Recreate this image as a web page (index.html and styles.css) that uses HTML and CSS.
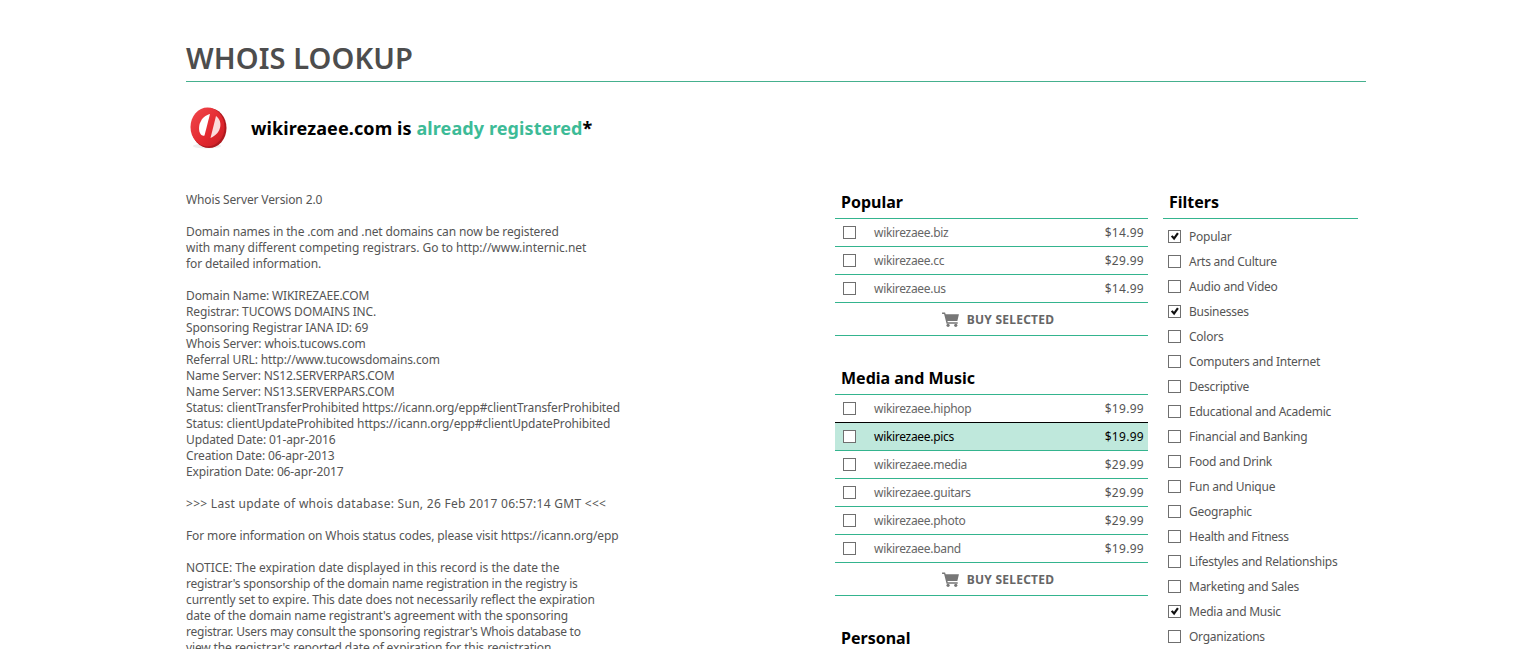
FILE: index.html
```html
<!DOCTYPE html>
<html lang="en">
<head>
    <meta charset="UTF-8">
    <meta name="viewport" content="width=device-width, initial-scale=1.0">
    <title>Whois Lookup</title>
    <link rel="stylesheet" href="styles.css">
</head>
<body>

<svg class="defs" width="0" height="0">
    <defs>
        <linearGradient id="disc" x1="0" y1="0" x2="1" y2="1">
            <stop offset="0" stop-color="#f0484c"/>
            <stop offset="0.6" stop-color="#e3282f"/>
            <stop offset="1" stop-color="#c81d24"/>
        </linearGradient>
    </defs>
    <symbol id="cart" viewBox="0 0 18 16">
        <path d="M0 0.6h3.2l0.6 1.7h14.2l-1.7 7.3H5.7l0.4 1.4h10.6v1.4H4.8L2.2 2H0z"/>
        <circle cx="6.4" cy="14.2" r="1.7"/>
        <circle cx="14.6" cy="14.2" r="1.7"/>
    </symbol>
    <symbol id="check" viewBox="0 0 13 13">
        <path d="M2.2 6.6l1.9-1.7 1.8 2 3.6-5 2.1 1.4-5.5 7.6z"/>
    </symbol>
</svg>

<div class="page">
    <h1 class="page-title">WHOIS LOOKUP</h1>

    <div class="status">
        <svg class="status-icon" width="42" height="44" viewBox="0 0 42 44">
            <ellipse cx="21" cy="40" rx="14" ry="2.5" fill="#eee"/>
            <ellipse cx="23" cy="22" rx="17.5" ry="20" fill="#b0191f"/>
            <ellipse cx="21.5" cy="21" rx="17" ry="19.5" fill="url(#disc)"/>
            <path d="M14.5 28C10.500 21 15 10 24 8L18.500 29.500C17 30 15.500 29.500 14.500 28z" fill="#fff"/>
            <path d="M30 10C37 15 36 27 24.500 32z" fill="#fbdcdc"/>
        </svg>
        <p class="status-text">wikirezaee.com is <span class="green">already registered</span>*</p>
    </div>

    <div class="main">
        <pre class="whois">Whois Server Version 2.0

Domain names in the .com and .net domains can now be registered
<span class="loose">with many different competing registrars. Go to http://www.internic.net</span>
for detailed information.

Domain Name: WIKIREZAEE.COM
Registrar: TUCOWS DOMAINS INC.
Sponsoring Registrar IANA ID: 69
Whois Server: whois.tucows.com
Referral URL: http://www.tucowsdomains.com
Name Server: NS12.SERVERPARS.COM
Name Server: NS13.SERVERPARS.COM
Status: clientTransferProhibited https://icann.org/epp#clientTransferProhibited
Status: clientUpdateProhibited https://icann.org/epp#clientUpdateProhibited
Updated Date: 01-apr-2016
Creation Date: 06-apr-2013
Expiration Date: 06-apr-2017

<span class="wide">&gt;&gt;&gt; Last update of whois database: Sun, 26 Feb 2017 06:57:14 GMT &lt;&lt;&lt;</span>

For more information on Whois status codes, please visit https://icann.org/epp

<span class="loose">NOTICE: The expiration date displayed in this record is the date the</span>
<span class="tight">registrar's sponsorship of the domain name registration in the registry is</span>
currently set to expire. This date does not necessarily reflect the expiration
date of the domain name registrant's agreement with the sponsoring
<span class="tight">registrar. Users may consult the sponsoring registrar's Whois database to</span>
view the registrar's reported date of expiration for this registration.</pre>

        <div class="domains">
            <h2 class="box-title">Popular</h2>
            <div class="domain"><span class="box"></span><span class="name">wikirezaee.biz</span><span class="price">$14.99</span></div>
            <div class="domain"><span class="box"></span><span class="name">wikirezaee.cc</span><span class="price">$29.99</span></div>
            <div class="domain"><span class="box"></span><span class="name">wikirezaee.us</span><span class="price">$14.99</span></div>
            <div class="buy"><svg class="cart"><use href="#cart"/></svg>BUY SELECTED</div>

            <h2 class="box-title">Media and Music</h2>
            <div class="domain"><span class="box"></span><span class="name">wikirezaee.hiphop</span><span class="price">$19.99</span></div>
            <div class="domain selected"><span class="box"></span><span class="name">wikirezaee.pics</span><span class="price">$19.99</span></div>
            <div class="domain"><span class="box"></span><span class="name">wikirezaee.media</span><span class="price">$29.99</span></div>
            <div class="domain"><span class="box"></span><span class="name">wikirezaee.guitars</span><span class="price">$29.99</span></div>
            <div class="domain"><span class="box"></span><span class="name">wikirezaee.photo</span><span class="price">$29.99</span></div>
            <div class="domain"><span class="box"></span><span class="name">wikirezaee.band</span><span class="price">$19.99</span></div>
            <div class="buy"><svg class="cart"><use href="#cart"/></svg>BUY SELECTED</div>

            <h2 class="box-title">Personal</h2>
        </div>

        <div class="filters">
            <h2 class="box-title">Filters</h2>
            <div class="filter-list">
                <div class="filter"><span class="box"><svg class="tick"><use href="#check"/></svg></span>Popular</div>
                <div class="filter"><span class="box"></span>Arts and Culture</div>
                <div class="filter"><span class="box"></span>Audio and Video</div>
                <div class="filter"><span class="box"><svg class="tick"><use href="#check"/></svg></span>Businesses</div>
                <div class="filter"><span class="box"></span>Colors</div>
                <div class="filter"><span class="box"></span>Computers and Internet</div>
                <div class="filter"><span class="box"></span>Descriptive</div>
                <div class="filter"><span class="box"></span>Educational and Academic</div>
                <div class="filter"><span class="box"></span>Financial and Banking</div>
                <div class="filter"><span class="box"></span>Food and Drink</div>
                <div class="filter"><span class="box"></span>Fun and Unique</div>
                <div class="filter"><span class="box"></span>Geographic</div>
                <div class="filter"><span class="box"></span>Health and Fitness</div>
                <div class="filter"><span class="box"></span>Lifestyles and Relationships</div>
                <div class="filter"><span class="box"></span>Marketing and Sales</div>
                <div class="filter"><span class="box"><svg class="tick"><use href="#check"/></svg></span>Media and Music</div>
                <div class="filter"><span class="box"></span>Organizations</div>
            </div>
        </div>
    </div>
</div>

</body>
</html>
```

FILE: styles.css
```css
html, body {
    height: 649px;
    overflow: hidden;
}

body {
    margin: 0;
    font-family: "Noto Sans", Arial, sans-serif;
    font-size: 12px;
    color: #555;
    background: #fff;
}

.defs {
    position: absolute;
}

.page {
    width: 1180px;
    margin-left: 186px;
}

.page-title {
    margin: 0;
    padding-top: 39px;
    height: 42px;
    border-bottom: 1px solid #45b08e;
    font-size: 29px;
    line-height: 38px;
    font-weight: 600;
    letter-spacing: 0.1px;
    color: #4d4d4d;
}

/* Linha do dominio registrado */
.status {
    display: flex;
    align-items: center;
    height: 46px;
    margin-top: 23px;
}

.status-icon {
    flex: none;
    margin-right: 23px;
}

.status-text {
    margin: 0;
    font-size: 18px;
    font-weight: 700;
    letter-spacing: 0.1px;
    color: #000;
}

.green {
    color: #3dbb97;
}

.main {
    display: grid;
    grid-template-columns: 634px 313px 195px;
    column-gap: 15px;
    margin-top: 41px;
}

.whois {
    margin: 0;
    font-family: inherit;
    font-size: 12px;
    line-height: 16px;
    letter-spacing: -0.13px;
    color: #555;
    white-space: pre;
}

.wide {
    letter-spacing: 0.28px;
}

.loose {
    letter-spacing: -0.04px;
}

.tight {
    letter-spacing: -0.24px;
}

.box-title {
    margin: 1px 0 0;
    height: 25px;
    padding-left: 6px;
    font-size: 16px;
    line-height: 18px;
    font-weight: 700;
    color: #000;
    border-bottom: 1px solid #34b48e;
}

.box {
    flex: none;
    display: block;
    width: 11px;
    height: 11px;
    border: 1px solid #6f6f6f;
    background: #fff;
}

.tick {
    display: block;
    width: 11px;
    height: 11px;
    fill: #111;
}

.domain {
    display: flex;
    align-items: center;
    height: 27px;
    padding: 0 4px 0 8px;
    border-bottom: 1px solid #34b48e;
    color: #666;
}

.domain .name {
    flex: 1;
    margin-left: 18px;
    letter-spacing: -0.3px;
}

.price {
    letter-spacing: 0.3px;
    color: #555;
}

.selected {
    background: #bfe8dc;
    color: #000;
    position: relative;
}

.selected .price {
    color: #000;
}

.selected::before {
    content: "";
    position: absolute;
    left: 0;
    right: 0;
    top: -1px;
    height: 1px;
    background: #000;
}

.buy {
    display: flex;
    align-items: center;
    justify-content: center;
    height: 32px;
    margin-bottom: 33px;
    padding-left: 13px;
    border-bottom: 1px solid #34b48e;
    font-weight: 700;
    letter-spacing: 0.25px;
    color: #666;
}

.cart {
    width: 17px;
    height: 15px;
    margin-right: 8px;
    fill: #777;
}

.filter-list {
    padding-top: 5px;
}

.filter {
    display: flex;
    align-items: center;
    height: 25px;
    padding-left: 5px;
    letter-spacing: -0.25px;
    color: #555;
}

.filter .box {
    margin-right: 8px;
}
```
